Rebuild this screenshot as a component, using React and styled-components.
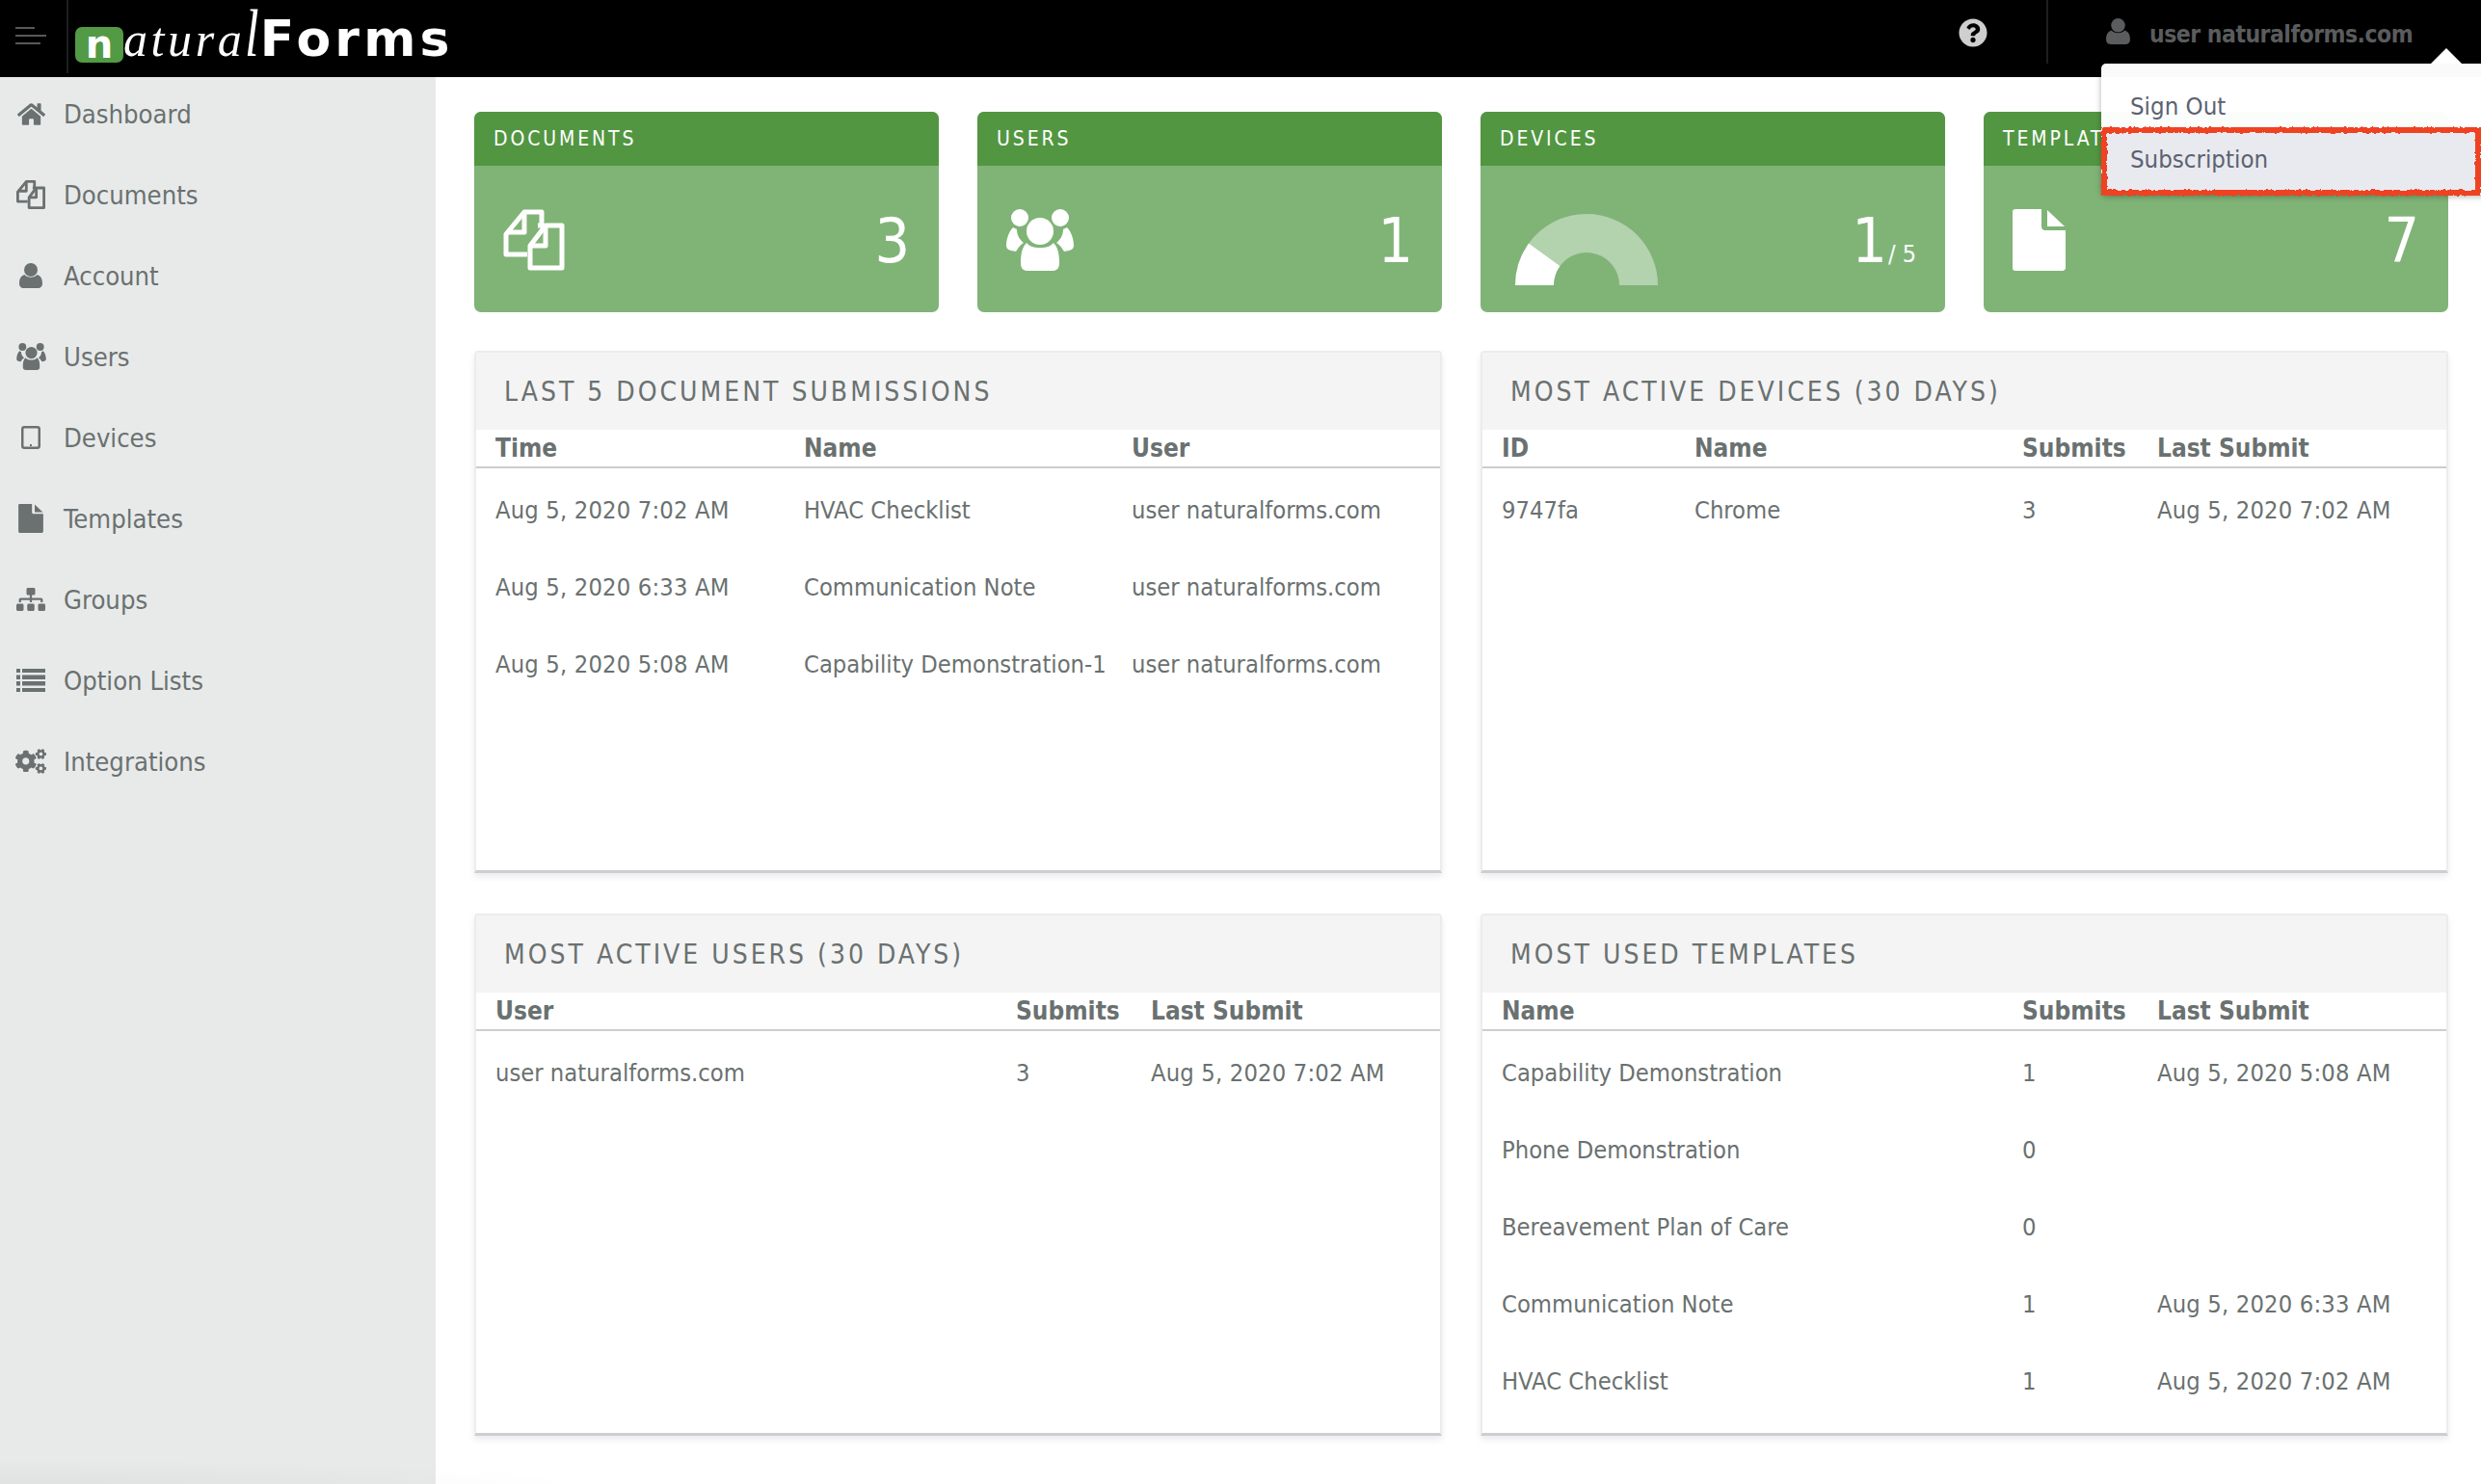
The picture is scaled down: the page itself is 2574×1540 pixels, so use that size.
import React from 'react';
import styled, { createGlobalStyle } from 'styled-components';
import { FaHome, FaSitemap, FaCogs, FaQuestionCircle } from 'react-icons/fa';

const GlobalStyle = createGlobalStyle`
  html, body {
    margin: 0;
    padding: 0;
    background: #fff;
  }
  body {
    font-family: "DejaVu Sans", "Liberation Sans", sans-serif;
    font-stretch: condensed;
    color: #6a7170;
    overflow: hidden;
  }
`;

const Page = styled.div`
  position: relative;
  width: 2574px;
  height: 1540px;
  overflow: hidden;

  &::after {
    content: '';
    position: absolute;
    left: 0;
    bottom: 0;
    width: 640px;
    height: 28px;
    background: radial-gradient(ellipse 620px 26px at 0 100%, rgba(0, 0, 0, 0.035), transparent);
  }
`;

const Header = styled.header`
  height: 80px;
  background: #000;
  display: flex;
  align-items: flex-start;
`;

const Burger = styled.div`
  width: 71px;
  height: 76px;
  box-sizing: border-box;
  padding: 28px 0 0 16px;
  border-right: 2px solid #1c1f22;
  display: flex;
  flex-direction: column;
  gap: 6px;
`;

const BurgerLine = styled.span`
  display: block;
  height: 2px;
  width: ${p => p.$w}px;
  background: #57595a;
`;

const Logo = styled.div`
  margin-left: 7px;
  height: 76px;
  display: flex;
  align-items: baseline;
  color: #fff;
`;

const LogoBadge = styled.span`
  width: 50px;
  height: 37px;
  margin-top: 28px;
  background: #529a45;
  border-radius: 7px;
  display: flex;
  align-items: center;
  justify-content: center;
  font: 700 40px/37px "DejaVu Sans", sans-serif;
  align-self: flex-start;
`;

const LogoScript = styled.span`
  font: italic 400 50px/62px "Liberation Serif", serif;
  letter-spacing: 3.6px;
`;

const LogoTall = styled.span`
  display: inline-block;
  font: italic 400 70px/70px "Liberation Serif", serif;
  transform: scaleX(0.75);
  transform-origin: left bottom;
  margin-right: -4px;
`;

const LogoBold = styled.span`
  font: 700 52px/62px "DejaVu Sans", sans-serif;
  font-stretch: normal;
  letter-spacing: 4.2px;
`;

const HeaderRight = styled.div`
  margin-left: auto;
  display: flex;
  align-items: flex-start;
`;

const HelpIcon = styled.span`
  display: flex;
  margin: 19px 61px 0 0;
  color: #cfcfcf;
  font-size: 30px;
`;

const UserMenu = styled.div`
  width: 451px;
  height: 66px;
  box-sizing: border-box;
  border-left: 2px solid #1c1f22;
  padding: 19px 0 0 60px;
  display: flex;
  align-items: flex-start;
  gap: 20px;
  color: #5a5c5d;
`;

const UserName = styled.span`
  font-size: 24.5px;
  font-weight: 700;
  letter-spacing: -0.5px;
  line-height: 34px;
`;

const Dropdown = styled.div`
  position: absolute;
  top: 66px;
  left: 2180px;
  width: 400px;
  height: 136px;
  background: rgba(255, 255, 255, 0.98);
  border-radius: 5px 0 0 5px;
  box-shadow: 0 2px 6px rgba(0, 0, 0, 0.3);
  font-size: 25.6px;
  color: #5b6272;

  &::before {
    content: '';
    position: absolute;
    top: -16px;
    left: 342px;
    border-left: 16px solid transparent;
    border-right: 16px solid transparent;
    border-bottom: 16px solid #fff;
  }
`;

const DropdownItem = styled.div`
  height: ${p => p.$h}px;
  box-sizing: border-box;
  padding: ${p => p.$top}px 0 ${p => p.$bottom}px 30px;
  display: flex;
  align-items: center;
  background: ${p => (p.$active ? '#e9eaef' : 'transparent')};
`;

const Annotation = styled.div`
  position: absolute;
  top: 132px;
  left: 2180px;
  width: 394px;
  height: 71px;
  box-sizing: border-box;
  border: 6px solid #ee4323;
  filter: url(#rough);
`;

const RoughFilter = styled.svg`
  position: absolute;
`;

const Body = styled.div`
  display: flex;
  height: 1460px;
`;

const Sidebar = styled.nav`
  width: 452px;
  flex: none;
  background: #e8eaea;
  display: flex;
  flex-direction: column;
  gap: 8px;
`;

const NavItem = styled.div`
  height: 76px;
  padding-left: 16px;
  display: flex;
  align-items: center;
  gap: 18px;
  font-size: 27.2px;
  color: #6a7170;
`;

const NavIcon = styled.span`
  width: 32px;
  height: 32px;
  flex: none;
  display: flex;
  align-items: center;
  justify-content: center;
  color: #6a7170;
  svg {
    display: block;
  }
`;

const Main = styled.main`
  flex: 1;
  padding: 36px 34px 0 40px;
  min-width: 0;
`;

const CardRow = styled.div`
  display: grid;
  grid-template-columns: repeat(4, 482px);
  gap: 40px;
  margin-bottom: 40px;
`;

const Card = styled.div`
  height: 208px;
  border-radius: 7px;
  overflow: hidden;
  background: #80b477;
  color: #fff;
`;

const CardTitle = styled.div`
  height: 56px;
  padding-left: 20px;
  background: #529642;
  font-size: 21px;
  letter-spacing: 2.9px;
  line-height: 56px;
`;

const CardBody = styled.div`
  height: 152px;
  padding: 0 30px;
  display: flex;
  justify-content: space-between;
  align-items: flex-start;
`;

const CardIcon = styled.div`
  margin-top: ${p => p.$top}px;
  margin-left: ${p => p.$left}px;
  display: flex;
`;

const CardCount = styled.div`
  font-size: 64px;
  line-height: 64px;
  margin-top: 46px;
  display: flex;
  align-items: baseline;
`;

const CardLimit = styled.span`
  font-size: 25px;
  margin-left: 1px;
`;

const PanelGrid = styled.div`
  display: grid;
  grid-template-columns: repeat(2, 1004px);
  grid-auto-rows: 542px;
  column-gap: 40px;
  row-gap: 42px;
`;

const Panel = styled.section`
  box-sizing: border-box;
  border: 2px solid #ececec;
  border-bottom: 3px solid #cdced0;
  border-radius: 4px 4px 0 0;
  box-shadow: 0 4px 6px rgba(200, 200, 210, 0.35);
  background: #fff;
`;

const PanelTitle = styled.h2`
  margin: 0;
  height: 80px;
  padding-left: 29px;
  background: #f4f4f4;
  font-size: 28px;
  font-weight: 400;
  line-height: 81px;
  letter-spacing: 3px;
  color: #6a7170;
`;

const Row = styled.div`
  display: grid;
  grid-template-columns: ${p => p.$cols};
  padding-left: 20px;
  align-items: center;
`;

const HeadRow = styled(Row)`
  height: 40px;
  box-sizing: border-box;
  font-size: 26px;
  font-weight: 700;
  border-bottom: 2px solid #cdcdcd;
`;

const BodyRow = styled(Row)`
  height: 80px;
  font-size: 25.3px;
`;

const Rows = styled.div`
  padding-top: 3px;
`;

const Cell = styled.span`
  white-space: nowrap;
  letter-spacing: ${p => (p.$date ? '0.17px' : 'normal')};
`;

const DocsIcon = ({ size, weight = 5 }) => (
  <svg width={size} height={size} viewBox="0 0 64 64" fill="none" stroke="currentColor" strokeWidth={weight} strokeLinejoin="round">
    <path d="M36 17 L40 17 V3 H22 L3 26 V47 H25" />
    <path d="M22 3 V24 H4" />
    <path d="M44 17 H61 V61 H28 V38 Z" />
    <path d="M44 17 V38 H28" />
  </svg>
);

const UsersIcon = ({ width, height }) => (
  <svg width={width} height={height} viewBox="0 0 70 64" fill="currentColor">
    <circle cx="14" cy="9" r="9" />
    <circle cx="56" cy="9" r="9" />
    <path d="M7 19 C2 24 0 32 0 38 C0 42 4 43 10 44 C13 39 15 37 18 35 C13 31 11 26 11 21 Z" />
    <path d="M63 19 C68 24 70 32 70 38 C70 42 66 43 60 44 C57 39 55 37 52 35 C57 31 59 26 59 21 Z" />
    <circle cx="35" cy="23" r="14" />
    <path d="M21 35 C26 42 44 42 49 35 C54 40 55 48 55 56 C55 62 52 64 48 64 H22 C18 64 15 62 15 56 C15 48 16 40 21 35 Z" />
  </svg>
);

const UserIcon = ({ width, height }) => (
  <svg width={width} height={height} viewBox="0 0 24 26" fill="currentColor">
    <circle cx="12" cy="7" r="7" />
    <path d="M5.5 12 C8 15.5 16 15.5 18.5 12 C22 13 24 16 24 21 C24 24.5 22 26 19.5 26 H4.5 C2 26 0 24.5 0 21 C0 16 2 13 5.5 12 Z" />
  </svg>
);

const TabletIcon = () => (
  <svg width="20" height="24" viewBox="0 0 20 24">
    <rect x="1.25" y="1.25" width="17.5" height="21.5" rx="2" fill="none" stroke="currentColor" strokeWidth="2.5" />
    <rect x="9" y="19" width="2" height="2" fill="currentColor" />
  </svg>
);

const FileIcon = ({ width, height }) => (
  <svg width={width} height={height} viewBox="0 0 55 64" fill="currentColor">
    <path d="M3 0 H30 V18 C30 20 31 22 34 22 H55 V61 C55 63 53 64 52 64 H3 C1 64 0 63 0 61 V3 C0 1 1 0 3 0 Z" />
    <path d="M36 1 L54 18 H36 Z" />
  </svg>
);

const ListIcon = () => (
  <svg width="30" height="24" viewBox="0 0 30 24" fill="currentColor">
    <rect x="0" y="0" width="4" height="4" />
    <rect x="6" y="0" width="24" height="4" />
    <rect x="0" y="6.5" width="4" height="4.5" />
    <rect x="6" y="6.5" width="24" height="4.5" />
    <rect x="0" y="13" width="4" height="4.5" />
    <rect x="6" y="13" width="24" height="4.5" />
    <rect x="0" y="20" width="4" height="4" />
    <rect x="6" y="20" width="24" height="4" />
  </svg>
);

// half ring split at 36 degrees, one of five devices used
const Gauge = () => (
  <svg width="148" height="74" viewBox="0 0 148 74">
    <path d="M74 0 A74 74 0 0 1 148 74 H108 A34 34 0 0 0 46.5 54 L14.1 30.5 A74 74 0 0 1 74 0 Z" fill="#b3d2ae" />
    <path d="M0 74 A74 74 0 0 1 14.1 30.5 L46.5 54 A34 34 0 0 0 40 74 Z" fill="#fff" />
  </svg>
);

const navItems = [
  { label: 'Dashboard', icon: <FaHome size={29} /> },
  { label: 'Documents', icon: <DocsIcon size={30} weight={6} /> },
  { label: 'Account', icon: <UserIcon width={24} height={26} /> },
  { label: 'Users', icon: <UsersIcon width={31} height={28} /> },
  { label: 'Devices', icon: <TabletIcon /> },
  { label: 'Templates', icon: <FileIcon width={26} height={30} /> },
  { label: 'Groups', icon: <FaSitemap size={30} /> },
  { label: 'Option Lists', icon: <ListIcon /> },
  { label: 'Integrations', icon: <FaCogs size={32} /> },
];

const panels = [
  {
    title: 'LAST 5 DOCUMENT SUBMISSIONS',
    cols: '320px 340px 1fr',
    head: ['Time', 'Name', 'User'],
    rows: [
      ['Aug 5, 2020 7:02 AM', 'HVAC Checklist', 'user naturalforms.com'],
      ['Aug 5, 2020 6:33 AM', 'Communication Note', 'user naturalforms.com'],
      ['Aug 5, 2020 5:08 AM', 'Capability Demonstration-1', 'user naturalforms.com'],
    ],
  },
  {
    title: 'MOST ACTIVE DEVICES (30 DAYS)',
    cols: '200px 340px 140px 1fr',
    head: ['ID', 'Name', 'Submits', 'Last Submit'],
    rows: [['9747fa', 'Chrome', '3', 'Aug 5, 2020 7:02 AM']],
  },
  {
    title: 'MOST ACTIVE USERS (30 DAYS)',
    cols: '540px 140px 1fr',
    head: ['User', 'Submits', 'Last Submit'],
    rows: [['user naturalforms.com', '3', 'Aug 5, 2020 7:02 AM']],
  },
  {
    title: 'MOST USED TEMPLATES',
    cols: '540px 140px 1fr',
    head: ['Name', 'Submits', 'Last Submit'],
    rows: [
      ['Capability Demonstration', '1', 'Aug 5, 2020 5:08 AM'],
      ['Phone Demonstration', '0', ''],
      ['Bereavement Plan of Care', '0', ''],
      ['Communication Note', '1', 'Aug 5, 2020 6:33 AM'],
      ['HVAC Checklist', '1', 'Aug 5, 2020 7:02 AM'],
    ],
  },
];

const App = () => (
  <Page>
    <GlobalStyle />
    <Header>
      <Burger>
        <BurgerLine $w={20} />
        <BurgerLine $w={32} />
        <BurgerLine $w={26} />
      </Burger>
      <Logo>
        <LogoBadge>n</LogoBadge>
        <LogoScript>atura</LogoScript>
        <LogoTall>l</LogoTall>
        <LogoBold>Forms</LogoBold>
      </Logo>
      <HeaderRight>
        <HelpIcon><FaQuestionCircle /></HelpIcon>
        <UserMenu>
          <UserIcon width={25} height={27} />
          <UserName>user naturalforms.com</UserName>
        </UserMenu>
      </HeaderRight>
    </Header>
    <Body>
      <Sidebar>
        {navItems.map(item => (
          <NavItem key={item.label}>
            <NavIcon>{item.icon}</NavIcon>
            {item.label}
          </NavItem>
        ))}
      </Sidebar>
      <Main>
        <CardRow>
          <Card>
            <CardTitle>DOCUMENTS</CardTitle>
            <CardBody>
              <CardIcon $top={45} $left={0}><DocsIcon size={64} /></CardIcon>
              <CardCount>3</CardCount>
            </CardBody>
          </Card>
          <Card>
            <CardTitle>USERS</CardTitle>
            <CardBody>
              <CardIcon $top={45} $left={0}><UsersIcon width={70} height={64} /></CardIcon>
              <CardCount>1</CardCount>
            </CardBody>
          </Card>
          <Card>
            <CardTitle>DEVICES</CardTitle>
            <CardBody>
              <CardIcon $top={50} $left={6}><Gauge /></CardIcon>
              <CardCount>1<CardLimit>/ 5</CardLimit></CardCount>
            </CardBody>
          </Card>
          <Card>
            <CardTitle>TEMPLATES</CardTitle>
            <CardBody>
              <CardIcon $top={45} $left={0}><FileIcon width={55} height={64} /></CardIcon>
              <CardCount>7</CardCount>
            </CardBody>
          </Card>
        </CardRow>
        <PanelGrid>
          {panels.map(panel => (
            <Panel key={panel.title}>
              <PanelTitle>{panel.title}</PanelTitle>
              <HeadRow $cols={panel.cols}>
                {panel.head.map(h => <Cell key={h}>{h}</Cell>)}
              </HeadRow>
              <Rows>
                {panel.rows.map(row => (
                  <BodyRow key={row[0]} $cols={panel.cols}>
                    {row.map((c, i) => <Cell key={i} $date={c.startsWith('Aug')}>{c}</Cell>)}
                  </BodyRow>
                ))}
              </Rows>
            </Panel>
          ))}
        </PanelGrid>
      </Main>
    </Body>
    <Dropdown>
      <DropdownItem $h={66} $top={22} $bottom={0}>Sign Out</DropdownItem>
      <DropdownItem $h={70} $top={0} $bottom={4} $active>Subscription</DropdownItem>
    </Dropdown>
    <Annotation />
    <RoughFilter width="0" height="0">
      <filter id="rough">
        <feTurbulence type="fractalNoise" baseFrequency="0.25" numOctaves="2" />
        <feDisplacementMap in="SourceGraphic" scale="4" />
      </filter>
    </RoughFilter>
  </Page>
);

export default App;
